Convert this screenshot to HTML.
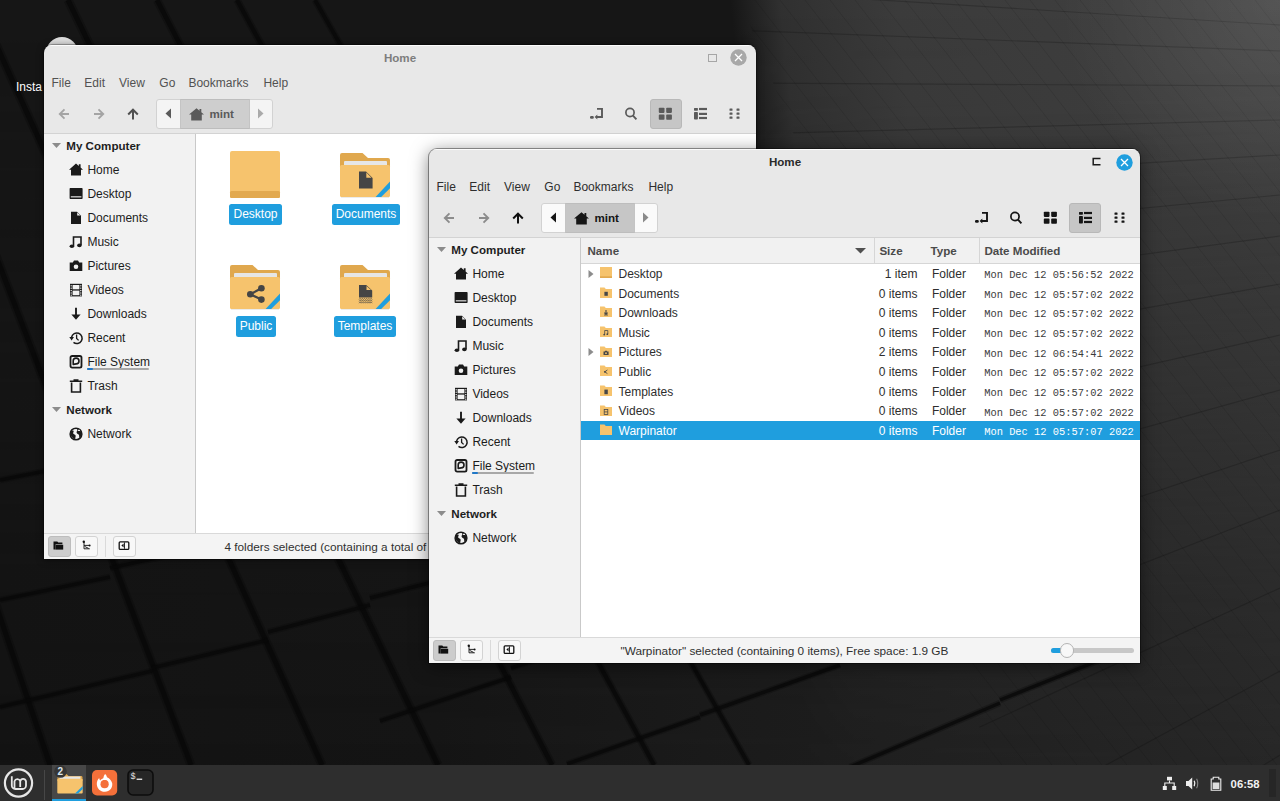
<!DOCTYPE html>
<html><head><meta charset="utf-8">
<style>
*{box-sizing:border-box;margin:0;padding:0}
html,body{width:1280px;height:801px;overflow:hidden;background:#151515;font-family:"Liberation Sans",sans-serif;font-size:12px;color:#303030}
.abs{position:absolute}
svg.abs{overflow:visible}
#wall{position:absolute;left:0;top:0;width:1280px;height:801px;background:linear-gradient(100deg,#0f0f0f 0%,#121212 40%,#262626 62%,#353535 85%,#3a3a3a 100%)}
.win{position:absolute;width:712px;height:514px;background:#e8e8e8;border-radius:8px 8px 0 0;overflow:hidden}
.win::after{content:'';position:absolute;left:0;top:0;right:0;height:1px;background:rgba(255,255,255,0.85);border-radius:8px 8px 0 0}
.t{position:absolute;white-space:pre;line-height:16px}
.lbl{position:absolute;background:#1f9ede;color:#fff;border-radius:2.5px;text-align:center;font-size:12px;line-height:21px;height:21px;white-space:pre}
</style></head><body>
<svg class="abs" style="left:0;top:0" width="1280" height="801" viewBox="0 0 1280 801">
<defs>
<linearGradient id="wg" gradientUnits="userSpaceOnUse" x1="730" y1="0" x2="1280" y2="-57">
<stop offset="0" stop-color="#161616"/><stop offset="0.09" stop-color="#303030"/><stop offset="0.3" stop-color="#3b3b3b"/><stop offset="0.7" stop-color="#3e3e3e"/><stop offset="1" stop-color="#424242"/>
</linearGradient>
<linearGradient id="wm" gradientUnits="userSpaceOnUse" x1="0" y1="0" x2="0" y2="765">
<stop offset="0" stop-color="#fff"/><stop offset="0.13" stop-color="#fff" stop-opacity="0.95"/><stop offset="0.31" stop-color="#fff" stop-opacity="0.74"/><stop offset="0.52" stop-color="#fff" stop-opacity="0.5"/><stop offset="0.78" stop-color="#fff" stop-opacity="0.2"/><stop offset="1" stop-color="#fff" stop-opacity="0.05"/>
</linearGradient>
<filter id="bl" filterUnits="userSpaceOnUse" x="-50" y="-50" width="1380" height="901"><feGaussianBlur stdDeviation="0.8"/></filter>
<clipPath id="cp"><path d="M740 0H1280V801H1000L860 300Z"/></clipPath>
<mask id="mk"><rect width="1280" height="801" fill="url(#wm)"/></mask>
<radialGradient id="wc" cx="1280" cy="0" r="220" gradientUnits="userSpaceOnUse">
<stop offset="0" stop-color="#fff" stop-opacity="0.10"/><stop offset="1" stop-color="#fff" stop-opacity="0"/>
</radialGradient>
</defs>
<linearGradient id="wb" gradientUnits="userSpaceOnUse" x1="0" y1="0" x2="1280" y2="0"><stop offset="0" stop-color="#131313"/><stop offset="0.34" stop-color="#151515"/><stop offset="0.55" stop-color="#1b1b1b"/><stop offset="0.78" stop-color="#202020"/><stop offset="1" stop-color="#262626"/></linearGradient>
<rect width="1280" height="801" fill="url(#wb)"/>
<g mask="url(#mk)"><rect width="1280" height="801" fill="url(#wg)"/></g><g clip-path="url(#cp)"><path d="M-220 0L405 801" stroke="#000" stroke-width="1" opacity="0.09"/><path d="M-195 0L430 801" stroke="#000" stroke-width="1" opacity="0.09"/><path d="M-170 0L455 801" stroke="#000" stroke-width="1" opacity="0.09"/><path d="M-145 0L480 801" stroke="#000" stroke-width="1" opacity="0.09"/><path d="M-120 0L505 801" stroke="#000" stroke-width="1" opacity="0.09"/><path d="M-95 0L530 801" stroke="#000" stroke-width="1" opacity="0.09"/><path d="M-70 0L555 801" stroke="#000" stroke-width="1" opacity="0.09"/><path d="M-45 0L580 801" stroke="#000" stroke-width="1" opacity="0.09"/><path d="M-20 0L605 801" stroke="#000" stroke-width="1" opacity="0.09"/><path d="M5 0L630 801" stroke="#000" stroke-width="1" opacity="0.09"/><path d="M30 0L655 801" stroke="#000" stroke-width="1" opacity="0.09"/><path d="M55 0L680 801" stroke="#000" stroke-width="1" opacity="0.09"/><path d="M80 0L705 801" stroke="#000" stroke-width="1" opacity="0.09"/><path d="M105 0L730 801" stroke="#000" stroke-width="1" opacity="0.09"/><path d="M130 0L755 801" stroke="#000" stroke-width="1" opacity="0.09"/><path d="M155 0L780 801" stroke="#000" stroke-width="1" opacity="0.09"/><path d="M180 0L805 801" stroke="#000" stroke-width="1" opacity="0.09"/><path d="M205 0L830 801" stroke="#000" stroke-width="1" opacity="0.09"/><path d="M230 0L855 801" stroke="#000" stroke-width="1" opacity="0.09"/><path d="M255 0L880 801" stroke="#000" stroke-width="1" opacity="0.09"/><path d="M280 0L905 801" stroke="#000" stroke-width="1" opacity="0.09"/><path d="M305 0L930 801" stroke="#000" stroke-width="1" opacity="0.09"/><path d="M330 0L955 801" stroke="#000" stroke-width="1" opacity="0.09"/><path d="M355 0L980 801" stroke="#000" stroke-width="1" opacity="0.09"/><path d="M380 0L1005 801" stroke="#000" stroke-width="1" opacity="0.09"/><path d="M405 0L1030 801" stroke="#000" stroke-width="1" opacity="0.09"/><path d="M430 0L1055 801" stroke="#000" stroke-width="1" opacity="0.09"/><path d="M455 0L1080 801" stroke="#000" stroke-width="1" opacity="0.09"/><path d="M480 0L1105 801" stroke="#000" stroke-width="1" opacity="0.09"/><path d="M505 0L1130 801" stroke="#000" stroke-width="1" opacity="0.09"/><path d="M530 0L1155 801" stroke="#000" stroke-width="1" opacity="0.09"/><path d="M555 0L1180 801" stroke="#000" stroke-width="1" opacity="0.09"/><path d="M580 0L1205 801" stroke="#000" stroke-width="1" opacity="0.09"/><path d="M605 0L1230 801" stroke="#000" stroke-width="1" opacity="0.09"/><path d="M630 0L1255 801" stroke="#000" stroke-width="1" opacity="0.09"/><path d="M655 0L1280 801" stroke="#000" stroke-width="1" opacity="0.09"/><path d="M680 0L1305 801" stroke="#000" stroke-width="1" opacity="0.09"/><path d="M705 0L1330 801" stroke="#000" stroke-width="1" opacity="0.09"/><path d="M730 0L1355 801" stroke="#000" stroke-width="1" opacity="0.09"/><path d="M755 0L1380 801" stroke="#000" stroke-width="1" opacity="0.09"/><path d="M780 0L1405 801" stroke="#000" stroke-width="1" opacity="0.09"/><path d="M805 0L1430 801" stroke="#000" stroke-width="1" opacity="0.09"/><path d="M830 0L1455 801" stroke="#000" stroke-width="1" opacity="0.09"/><path d="M855 0L1480 801" stroke="#000" stroke-width="1" opacity="0.09"/><path d="M880 0L1505 801" stroke="#000" stroke-width="1" opacity="0.09"/><path d="M905 0L1530 801" stroke="#000" stroke-width="1" opacity="0.09"/><path d="M930 0L1555 801" stroke="#000" stroke-width="1" opacity="0.09"/><path d="M955 0L1580 801" stroke="#000" stroke-width="1" opacity="0.09"/><path d="M980 0L1605 801" stroke="#000" stroke-width="1" opacity="0.09"/><path d="M1005 0L1630 801" stroke="#000" stroke-width="1" opacity="0.09"/><path d="M1030 0L1655 801" stroke="#000" stroke-width="1" opacity="0.09"/><path d="M1055 0L1680 801" stroke="#000" stroke-width="1" opacity="0.09"/><path d="M1080 0L1705 801" stroke="#000" stroke-width="1" opacity="0.09"/><path d="M1105 0L1730 801" stroke="#000" stroke-width="1" opacity="0.09"/><path d="M1130 0L1755 801" stroke="#000" stroke-width="1" opacity="0.09"/><path d="M1155 0L1780 801" stroke="#000" stroke-width="1" opacity="0.09"/><path d="M1180 0L1805 801" stroke="#000" stroke-width="1" opacity="0.09"/><path d="M1205 0L1830 801" stroke="#000" stroke-width="1" opacity="0.09"/><path d="M1230 0L1855 801" stroke="#000" stroke-width="1" opacity="0.09"/><path d="M1255 0L1880 801" stroke="#000" stroke-width="1" opacity="0.09"/><path d="M1280 0L1905 801" stroke="#000" stroke-width="1" opacity="0.09"/><path d="M1305 0L1930 801" stroke="#000" stroke-width="1" opacity="0.09"/><path d="M1330 0L1955 801" stroke="#000" stroke-width="1" opacity="0.09"/><path d="M1355 0L1980 801" stroke="#000" stroke-width="1" opacity="0.09"/><path d="M1380 0L2005 801" stroke="#000" stroke-width="1" opacity="0.09"/><path d="M1405 0L2030 801" stroke="#000" stroke-width="1" opacity="0.09"/><path d="M1430 0L2055 801" stroke="#000" stroke-width="1" opacity="0.09"/><path d="M1455 0L2080 801" stroke="#000" stroke-width="1" opacity="0.09"/><path d="M1480 0L2105 801" stroke="#000" stroke-width="1" opacity="0.09"/><path d="M1505 0L2130 801" stroke="#000" stroke-width="1" opacity="0.09"/><path d="M600 -17.5L1280 25" stroke="#000" stroke-width="1.2" opacity="0.18"/><path d="M600 25.0L1280 51" stroke="#000" stroke-width="1.2" opacity="0.18"/><path d="M600 82.2L1280 86" stroke="#000" stroke-width="1.2" opacity="0.18"/><path d="M600 137.8L1280 120" stroke="#000" stroke-width="1.2" opacity="0.18"/><path d="M600 195.0L1280 155" stroke="#000" stroke-width="1.2" opacity="0.18"/><path d="M600 260.4L1280 195" stroke="#000" stroke-width="1.2" opacity="0.18"/><path d="M600 327.4L1280 236" stroke="#000" stroke-width="1.2" opacity="0.18"/><path d="M600 405.9L1280 284" stroke="#000" stroke-width="1.2" opacity="0.18"/><path d="M600 489.3L1280 335" stroke="#000" stroke-width="1.2" opacity="0.18"/><path d="M600 579.2L1280 390" stroke="#000" stroke-width="1.2" opacity="0.18"/><path d="M600 677.3L1280 450" stroke="#000" stroke-width="1.2" opacity="0.18"/><path d="M600 775.4L1280 510" stroke="#000" stroke-width="1.2" opacity="0.18"/><path d="M600 902.9L1280 588" stroke="#000" stroke-width="1.2" opacity="0.18"/><path d="M600 1038.6L1280 671" stroke="#000" stroke-width="1.2" opacity="0.18"/><path d="M600 1176.0L1280 755" stroke="#000" stroke-width="1.2" opacity="0.18"/></g>
<path d="M-208 0L50 765" stroke="#080808" stroke-width="9.0" opacity="0.35"/><path d="M-208 0L50 765" stroke="#080808" stroke-width="5.1" opacity="0.75"/><path d="M-102 0L191 765" stroke="#080808" stroke-width="9.0" opacity="0.35"/><path d="M-102 0L191 765" stroke="#080808" stroke-width="5.1" opacity="0.75"/><path d="M-24 0L322 765" stroke="#080808" stroke-width="9.0" opacity="0.35"/><path d="M-24 0L322 765" stroke="#080808" stroke-width="5.1" opacity="0.75"/><path d="M68 0L438 765" stroke="#080808" stroke-width="9.0" opacity="0.35"/><path d="M68 0L438 765" stroke="#080808" stroke-width="5.1" opacity="0.75"/><path d="M157 0L552 765" stroke="#080808" stroke-width="8.2" opacity="0.35"/><path d="M157 0L552 765" stroke="#080808" stroke-width="4.7" opacity="0.75"/><path d="M237 0L654 765" stroke="#080808" stroke-width="7.5" opacity="0.35"/><path d="M237 0L654 765" stroke="#080808" stroke-width="4.2" opacity="0.75"/><path d="M315 0L749 765" stroke="#080808" stroke-width="6.8" opacity="0.35"/><path d="M315 0L749 765" stroke="#080808" stroke-width="3.8" opacity="0.75"/><path d="M0 707L152 671" stroke="#080808" stroke-width="6.5" opacity="0.3"/><path d="M0 707L152 671" stroke="#080808" stroke-width="3.5" opacity="0.75"/><path d="M152 668L268 640" stroke="#080808" stroke-width="6.5" opacity="0.3"/><path d="M152 668L268 640" stroke="#080808" stroke-width="3.5" opacity="0.75"/><path d="M268 632L370 605" stroke="#080808" stroke-width="6.5" opacity="0.3"/><path d="M268 632L370 605" stroke="#080808" stroke-width="3.5" opacity="0.75"/><path d="M370 598L460 575" stroke="#080808" stroke-width="6.5" opacity="0.3"/><path d="M370 598L460 575" stroke="#080808" stroke-width="3.5" opacity="0.75"/><path d="M460 566L560 540" stroke="#080808" stroke-width="6.5" opacity="0.3"/><path d="M460 566L560 540" stroke="#080808" stroke-width="3.5" opacity="0.75"/><path d="M0 600L110 577" stroke="#080808" stroke-width="6.5" opacity="0.3"/><path d="M0 600L110 577" stroke="#080808" stroke-width="3.5" opacity="0.75"/><path d="M110 568L230 542" stroke="#080808" stroke-width="6.5" opacity="0.3"/><path d="M110 568L230 542" stroke="#080808" stroke-width="3.5" opacity="0.75"/><path d="M230 534L340 508" stroke="#080808" stroke-width="6.5" opacity="0.3"/><path d="M230 534L340 508" stroke="#080808" stroke-width="3.5" opacity="0.75"/><path d="M380 721L511 677" stroke="#080808" stroke-width="6.5" opacity="0.3"/><path d="M380 721L511 677" stroke="#080808" stroke-width="3.5" opacity="0.75"/><path d="M511 668L610 636" stroke="#080808" stroke-width="6.5" opacity="0.3"/><path d="M511 668L610 636" stroke="#080808" stroke-width="3.5" opacity="0.75"/><path d="M610 628L700 600" stroke="#080808" stroke-width="6.5" opacity="0.3"/><path d="M610 628L700 600" stroke="#080808" stroke-width="3.5" opacity="0.75"/><path d="M700 594L800 566" stroke="#080808" stroke-width="6.5" opacity="0.3"/><path d="M700 594L800 566" stroke="#080808" stroke-width="3.5" opacity="0.75"/><path d="M567 764L700 717" stroke="#080808" stroke-width="6.5" opacity="0.3"/><path d="M567 764L700 717" stroke="#080808" stroke-width="3.5" opacity="0.75"/><path d="M700 715L840 665" stroke="#080808" stroke-width="6.5" opacity="0.3"/><path d="M700 715L840 665" stroke="#080808" stroke-width="3.5" opacity="0.75"/><path d="M850 767L1000 703" stroke="#080808" stroke-width="6.5" opacity="0.3"/><path d="M850 767L1000 703" stroke="#080808" stroke-width="3.5" opacity="0.75"/><path d="M1000 700L1110 656" stroke="#080808" stroke-width="6.5" opacity="0.3"/><path d="M1000 700L1110 656" stroke="#080808" stroke-width="3.5" opacity="0.75"/><path d="M0 480L90 462" stroke="#080808" stroke-width="6.5" opacity="0.3"/><path d="M0 480L90 462" stroke="#080808" stroke-width="3.5" opacity="0.75"/>
<rect width="1280" height="801" fill="url(#wc)"/>
</svg>
<div class="abs" style="left:45.5px;top:37px;width:32px;height:32px;border-radius:50%;background:#dcdcdc"></div>
<div class="t" style="left:16.00px;top:79.34px;font-size:12px;font-weight:normal;color:#ffffff;font-family:'Liberation Sans',sans-serif;">Insta</div>
<div class="win" style="left:44px;top:45px;box-shadow:0 0 0 1px rgba(0,0,0,0.25),0 1px 7px rgba(0,0,0,0.55)">
<div class="t" style="left:156.00px;width:400px;text-align:center;top:5.08px;font-size:11.6px;font-weight:bold;color:#7d7d7d">Home</div>
<div class="abs" style="left:664px;top:9px;width:8.5px;height:7.5px;background:transparent;border:1px solid #a6a6a6"></div>
<svg class="abs" style="left:686px;top:4.3px;" width="17" height="17" viewBox="0 0 17 17"><circle cx="8.5" cy="8.5" r="8.2" fill="#a8a8a8"/><path d="M5 5L12 12M12 5L5 12" stroke="#fff" stroke-width="1.3"/></svg>
<div class="t" style="left:7.50px;top:30.44px;font-size:12px;font-weight:normal;color:#525252;font-family:'Liberation Sans',sans-serif;">File</div>
<div class="t" style="left:40.30px;top:30.44px;font-size:12px;font-weight:normal;color:#525252;font-family:'Liberation Sans',sans-serif;">Edit</div>
<div class="t" style="left:75.00px;top:30.44px;font-size:12px;font-weight:normal;color:#525252;font-family:'Liberation Sans',sans-serif;">View</div>
<div class="t" style="left:115.30px;top:30.44px;font-size:12px;font-weight:normal;color:#525252;font-family:'Liberation Sans',sans-serif;">Go</div>
<div class="t" style="left:144.40px;top:30.44px;font-size:12px;font-weight:normal;color:#525252;font-family:'Liberation Sans',sans-serif;">Bookmarks</div>
<div class="t" style="left:219.40px;top:30.44px;font-size:12px;font-weight:normal;color:#525252;font-family:'Liberation Sans',sans-serif;">Help</div>
<svg class="abs" style="left:14px;top:62.5px;" width="12" height="12" viewBox="0 0 12 12"><path d="M11 6H2M6.5 1.3L1.8 6L6.5 10.7" stroke="#a4a4a4" stroke-width="1.9" fill="none" stroke-linecap="butt"/></svg>
<svg class="abs" style="left:48.5px;top:62.5px;" width="12" height="12" viewBox="0 0 12 12"><path d="M1 6H10M5.5 1.3L10.2 6L5.5 10.7" stroke="#a4a4a4" stroke-width="1.9" fill="none"/></svg>
<svg class="abs" style="left:83.4px;top:62.5px;" width="12" height="12" viewBox="0 0 12 12"><path d="M6 11.5V1.8M1.2 6.5L6 1.7L10.8 6.5" stroke="#505050" stroke-width="2" fill="none"/></svg>
<div class="abs" style="left:111.5px;top:54px;width:117px;height:29.5px;background:#f4f4f4;border:1px solid #d2d2d2;border-radius:3px"></div>
<div class="abs" style="left:135.5px;top:54px;width:70px;height:29.5px;background:#cecece;border:1px solid #bdbdbd;border-left:1px solid #c4c4c4;border-right:1px solid #c4c4c4"></div>
<svg class="abs" style="left:121px;top:63px;" width="7" height="11" viewBox="0 0 7 11"><path d="M6 0.5V10.5L0.5 5.5Z" fill="#5a5a5a"/></svg>
<svg class="abs" style="left:214px;top:63px;" width="6" height="11" viewBox="0 0 6 11"><path d="M0 0.5V10.5L5.5 5.5Z" fill="#aaaaaa"/></svg>
<svg class="abs" style="left:145px;top:62.5px;" width="15" height="12.5" viewBox="0 0 15 12.5"><path d="M7.5 0.3L0 6.6H2.2V12.5H12.8V6.6H15L12.3 4.3V1H10.5V2.8Z" fill="#5a5a5a"/></svg>
<div class="t" style="left:165.50px;top:61.18px;font-size:11.6px;font-weight:bold;color:#5a5a5a;font-family:'Liberation Sans',sans-serif;">mint</div>
<div class="abs" style="left:606px;top:54px;width:32px;height:30px;background:#c6c6c6;border:1px solid #b8b8b8;border-radius:3px"></div>
<svg class="abs" style="left:545px;top:62px;" width="16" height="14" viewBox="0 0 16 14"><path d="M8 1.9H13V10H7.5" stroke="#5a5a5a" stroke-width="1.9" fill="none"/><path d="M8.3 7.4V12.6L5.6 10Z" fill="#5a5a5a"/><rect x="1" y="9" width="3.8" height="2.8" rx="1.2" fill="#5a5a5a"/></svg>
<svg class="abs" style="left:579px;top:62px;" width="16" height="14" viewBox="0 0 16 14"><circle cx="7" cy="5.5" r="4.1" stroke="#5a5a5a" stroke-width="1.7" fill="none"/><path d="M9.8 8.4L13.4 12.3" stroke="#5a5a5a" stroke-width="1.9"/></svg>
<svg class="abs" style="left:614px;top:62px;" width="15" height="14" viewBox="0 0 15 14"><rect x="0.8" y="0.7" width="5.7" height="5.2" rx="0.8" fill="#5a5a5a"/><rect x="8.2" y="0.7" width="5.7" height="5.2" rx="0.8" fill="#5a5a5a"/><rect x="0.8" y="7.6" width="5.7" height="5.2" rx="0.8" fill="#5a5a5a"/><rect x="8.2" y="7.6" width="5.7" height="5.2" rx="0.8" fill="#5a5a5a"/></svg>
<svg class="abs" style="left:649px;top:62px;" width="15" height="14" viewBox="0 0 15 14"><rect x="1" y="0.9" width="3.9" height="2.8" rx="0.6" fill="#5a5a5a"/><rect x="1" y="5" width="3.9" height="7.5" rx="0.8" fill="#5a5a5a"/><rect x="6" y="0.9" width="8" height="2.2" fill="#5a5a5a"/><rect x="6" y="5.8" width="8" height="2.2" fill="#5a5a5a"/><rect x="6" y="9.9" width="8" height="2.2" fill="#5a5a5a"/></svg>
<svg class="abs" style="left:685px;top:62px;" width="12" height="14" viewBox="0 0 12 14"><rect x="0.5" y="1.5" width="3" height="2.2" rx="0.5" fill="#5a5a5a"/><rect x="0.5" y="5.5" width="3" height="2.2" rx="0.5" fill="#5a5a5a"/><rect x="0.5" y="9.5" width="3" height="2.2" rx="0.5" fill="#5a5a5a"/><rect x="7.5" y="1.5" width="3" height="2.2" rx="0.5" fill="#5a5a5a"/><rect x="7.5" y="5.5" width="3" height="2.2" rx="0.5" fill="#5a5a5a"/><rect x="7.5" y="9.5" width="3" height="2.2" rx="0.5" fill="#5a5a5a"/></svg>
<div class="abs" style="left:0px;top:88px;width:712px;height:1px;background:#d3d3d3;"></div>
<div class="abs" style="left:0px;top:89px;width:151px;height:399px;background:#f2f2f2;"></div>
<div class="abs" style="left:151px;top:89px;width:1px;height:399px;background:#c9c9c9;"></div>
<svg class="abs" style="left:7.5px;top:97.5px;" width="9" height="5" viewBox="0 0 9 5"><path d="M0 0H9L4.5 5Z" fill="#8c8c8c"/></svg>
<div class="t" style="left:22.30px;top:93.08px;font-size:11.6px;font-weight:bold;color:#1e1e1e;font-family:'Liberation Sans',sans-serif;">My Computer</div>
<svg class="abs" style="left:24.5px;top:118px;" width="14" height="14" viewBox="0 0 14 14"><path d="M7 0.5L0 6.7H2V12.5H12V6.7H14L11.6 4.5V1.2H9.8V2.9Z" fill="#1a1a1a"/></svg>
<div class="t" style="left:43.40px;top:117.44px;font-size:12px;font-weight:normal;color:#1c1c1c;font-family:'Liberation Sans',sans-serif;">Home</div>
<svg class="abs" style="left:24.5px;top:142px;" width="14" height="14" viewBox="0 0 14 14"><rect x="0.6" y="1" width="13" height="11" rx="0.8" fill="#1a1a1a"/><rect x="1.8" y="9.3" width="10.6" height="1.1" fill="#f2f2f2"/></svg>
<div class="t" style="left:43.40px;top:141.44px;font-size:12px;font-weight:normal;color:#1c1c1c;font-family:'Liberation Sans',sans-serif;">Desktop</div>
<svg class="abs" style="left:24.5px;top:166px;" width="14" height="14" viewBox="0 0 14 14"><path d="M2 0.8H8L12 4.8V13H2Z" fill="#1a1a1a"/><path d="M8.2 1.4V4.6H11.4Z" fill="#f2f2f2"/></svg>
<div class="t" style="left:43.40px;top:165.44px;font-size:12px;font-weight:normal;color:#1c1c1c;font-family:'Liberation Sans',sans-serif;">Documents</div>
<svg class="abs" style="left:24.5px;top:190px;" width="14" height="14" viewBox="0 0 14 14"><path d="M4.5 11V2H12V10" stroke="#1a1a1a" stroke-width="1.6" fill="none"/><ellipse cx="2.9" cy="11.2" rx="2.3" ry="1.8" fill="#1a1a1a"/><ellipse cx="10.4" cy="10.4" rx="2.3" ry="1.8" fill="#1a1a1a"/></svg>
<div class="t" style="left:43.40px;top:189.44px;font-size:12px;font-weight:normal;color:#1c1c1c;font-family:'Liberation Sans',sans-serif;">Music</div>
<svg class="abs" style="left:24.5px;top:214px;" width="14" height="14" viewBox="0 0 14 14"><path d="M0.7 3.5H3.8L5 1.6H9L10.2 3.5H13.3V12H0.7Z" fill="#1a1a1a"/><circle cx="7" cy="7.7" r="2.3" fill="#f2f2f2"/></svg>
<div class="t" style="left:43.40px;top:213.44px;font-size:12px;font-weight:normal;color:#1c1c1c;font-family:'Liberation Sans',sans-serif;">Pictures</div>
<svg class="abs" style="left:24.5px;top:238px;" width="14" height="14" viewBox="0 0 14 14"><rect x="1" y="0.8" width="12" height="12.6" fill="#1a1a1a"/><rect x="3.6" y="2" width="6.8" height="4.3" fill="#f2f2f2"/><rect x="3.6" y="7.6" width="6.8" height="4.6" fill="#f2f2f2"/><rect x="1.6" y="2.2" width="1.2" height="1.2" fill="#f2f2f2"/><rect x="1.6" y="4.6" width="1.2" height="1.2" fill="#f2f2f2"/><rect x="1.6" y="7" width="1.2" height="1.2" fill="#f2f2f2"/><rect x="1.6" y="9.4" width="1.2" height="1.2" fill="#f2f2f2"/><rect x="1.6" y="11.6" width="1.2" height="1.2" fill="#f2f2f2"/><rect x="11.2" y="2.2" width="1.2" height="1.2" fill="#f2f2f2"/><rect x="11.2" y="4.6" width="1.2" height="1.2" fill="#f2f2f2"/><rect x="11.2" y="7" width="1.2" height="1.2" fill="#f2f2f2"/><rect x="11.2" y="9.4" width="1.2" height="1.2" fill="#f2f2f2"/><rect x="11.2" y="11.6" width="1.2" height="1.2" fill="#f2f2f2"/></svg>
<div class="t" style="left:43.40px;top:237.44px;font-size:12px;font-weight:normal;color:#1c1c1c;font-family:'Liberation Sans',sans-serif;">Videos</div>
<svg class="abs" style="left:24.5px;top:262px;" width="14" height="14" viewBox="0 0 14 14"><path d="M7 0.8V10" stroke="#1a1a1a" stroke-width="1.9"/><path d="M2.4 7.5L7 12.8L11.6 7.5Z" fill="#1a1a1a"/></svg>
<div class="t" style="left:43.40px;top:261.44px;font-size:12px;font-weight:normal;color:#1c1c1c;font-family:'Liberation Sans',sans-serif;">Downloads</div>
<svg class="abs" style="left:24.5px;top:286px;" width="14" height="14" viewBox="0 0 14 14"><path d="M2.6 6.2A5.3 5.3 0 1 1 4.5 11.4" stroke="#1a1a1a" stroke-width="1.5" fill="none"/><path d="M0.3 6H5L2.6 9.4Z" fill="#1a1a1a"/><path d="M7.6 3.6V7.4L9.6 9.4" stroke="#1a1a1a" stroke-width="1.3" fill="none"/></svg>
<div class="t" style="left:43.40px;top:285.44px;font-size:12px;font-weight:normal;color:#1c1c1c;font-family:'Liberation Sans',sans-serif;">Recent</div>
<svg class="abs" style="left:24.5px;top:310px;" width="14" height="14" viewBox="0 0 14 14"><rect x="1.5" y="1" width="11" height="11.7" rx="1.6" stroke="#1a1a1a" stroke-width="1.8" fill="none"/><path d="M4.2 9.4V6A2.9 2.9 0 1 1 7.2 8.9Z" stroke="#1a1a1a" stroke-width="1.6" fill="none" stroke-linejoin="round"/></svg>
<div class="t" style="left:43.40px;top:309.44px;font-size:12px;font-weight:normal;color:#1c1c1c;font-family:'Liberation Sans',sans-serif;">File System</div>
<svg class="abs" style="left:24.5px;top:334px;" width="14" height="14" viewBox="0 0 14 14"><path d="M0.8 2.2H13.2M4.5 0.9H9.5" stroke="#1a1a1a" stroke-width="1.4"/><path d="M2.6 3.6V13H11.4V3.6" stroke="#1a1a1a" stroke-width="1.6" fill="none"/></svg>
<div class="t" style="left:43.40px;top:333.44px;font-size:12px;font-weight:normal;color:#1c1c1c;font-family:'Liberation Sans',sans-serif;">Trash</div>
<div class="abs" style="left:43px;top:323px;width:62px;height:2px;background:#a8a8a8;border-radius:1px"></div>
<div class="abs" style="left:43px;top:323px;width:6px;height:2px;background:#1f78c8;border-radius:1px"></div>
<svg class="abs" style="left:7.5px;top:361.5px;" width="9" height="5" viewBox="0 0 9 5"><path d="M0 0H9L4.5 5Z" fill="#8c8c8c"/></svg>
<div class="t" style="left:22.30px;top:357.08px;font-size:11.6px;font-weight:bold;color:#1e1e1e;font-family:'Liberation Sans',sans-serif;">Network</div>
<svg class="abs" style="left:24.5px;top:382px;" width="14" height="14" viewBox="0 0 14 14"><circle cx="7" cy="7" r="6.6" fill="#1a1a1a"/><circle cx="7" cy="7" r="5.1" fill="#f2f2f2"/><path d="M1.8 4.2C3 3.6 4.2 3 4.6 4C5 5 3.8 5.6 4.2 6.6C4.8 7.6 6 7.4 6.6 8.4C7 9.2 6.2 10 6.4 11.2L6 12.2C4 11.6 2.2 10 1.8 8Z" fill="#1a1a1a"/><path d="M8 1.8C8.6 3 8 4 7.6 5C7.2 6.2 8.6 6.8 9.6 7.4C10.4 8 10 9.6 10.4 11.2L11.6 10.2C12.6 8.6 12.6 5 11 3C10 2.4 9 1.9 8 1.8Z" fill="#1a1a1a"/><path d="M8.8 3.4H11" stroke="#f2f2f2" stroke-width="1.1"/></svg>
<div class="t" style="left:43.40px;top:381.44px;font-size:12px;font-weight:normal;color:#1c1c1c;font-family:'Liberation Sans',sans-serif;">Network</div>
<div class="abs" style="left:152px;top:89px;width:560px;height:399px;background:#ffffff;"></div>
<svg class="abs" style="left:186px;top:106px;" width="50" height="48" viewBox="0 0 50 48"><rect x="0" y="0" width="50" height="47" rx="2" fill="#f6c36d"/><rect x="0" y="40" width="50" height="7" rx="1.5" fill="#e2a94f"/></svg>
<svg class="abs" style="left:296px;top:107.5px;" width="50" height="46" viewBox="0 0 50 46"><defs></defs><path d="M2 0H22.5L28 5H48A2 2 0 0 1 50 7V20H0V2A2 2 0 0 1 2 0Z" fill="#e0a84e"/><rect x="4" y="8" width="43" height="6" rx="1" fill="#e6e6e6"/><rect x="0" y="12" width="50" height="32" rx="1.5" fill="#f6c36d"/><path d="M35.6 44L41.2 44L50 35.2V28.6Z" fill="#1f9ede"/><rect x="1" y="44" width="48" height="1" fill="#000" opacity="0.08"/><path d="M19 18.4H26L32.6 25V35.6H19Z" fill="#454545"/><path d="M26.3 19.5V24.7H31.5Z" fill="#f6c36d"/></svg>
<svg class="abs" style="left:186px;top:219.5px;" width="50" height="46" viewBox="0 0 50 46"><defs></defs><path d="M2 0H22.5L28 5H48A2 2 0 0 1 50 7V20H0V2A2 2 0 0 1 2 0Z" fill="#e0a84e"/><rect x="4" y="8" width="43" height="6" rx="1" fill="#e6e6e6"/><rect x="0" y="12" width="50" height="32" rx="1.5" fill="#f6c36d"/><path d="M35.6 44L41.2 44L50 35.2V28.6Z" fill="#1f9ede"/><rect x="1" y="44" width="48" height="1" fill="#000" opacity="0.08"/><circle cx="20.3" cy="29.3" r="3.3" fill="#454545"/><circle cx="31.4" cy="23.3" r="3.3" fill="#454545"/><circle cx="31.4" cy="34.6" r="3.3" fill="#454545"/><path d="M20.3 29.3L31.4 23.3M20.3 29.3L31.4 34.6" stroke="#454545" stroke-width="2.2"/></svg>
<svg class="abs" style="left:296px;top:219.5px;" width="50" height="46" viewBox="0 0 50 46"><defs></defs><path d="M2 0H22.5L28 5H48A2 2 0 0 1 50 7V20H0V2A2 2 0 0 1 2 0Z" fill="#e0a84e"/><rect x="4" y="8" width="43" height="6" rx="1" fill="#e6e6e6"/><rect x="0" y="12" width="50" height="32" rx="1.5" fill="#f6c36d"/><path d="M35.6 44L41.2 44L50 35.2V28.6Z" fill="#1f9ede"/><rect x="1" y="44" width="48" height="1" fill="#000" opacity="0.08"/><path d="M19 19.9H26.2L32.2 25.6V32.6H19Z" fill="#454545"/><path d="M26.5 21V25.1H31Z" fill="#f6c36d"/><path d="M19 34.6L20.1 33.300000000000004L21.2 34.6L22.3 33.300000000000004L23.4 34.6L24.5 33.300000000000004L25.6 34.6L26.7 33.300000000000004L27.8 34.6L28.9 33.300000000000004L30 34.6L31.1 33.300000000000004L32.2 34.6" stroke="#454545" stroke-width="0.8" fill="none" opacity="0.8"/><path d="M19 36.4L20.1 35.1L21.2 36.4L22.3 35.1L23.4 36.4L24.5 35.1L25.6 36.4L26.7 35.1L27.8 36.4L28.9 35.1L30 36.4L31.1 35.1L32.2 36.4" stroke="#454545" stroke-width="0.8" fill="none" opacity="0.8"/><path d="M19 38.2L20.1 36.900000000000006L21.2 38.2L22.3 36.900000000000006L23.4 38.2L24.5 36.900000000000006L25.6 38.2L26.7 36.900000000000006L27.8 38.2L28.9 36.900000000000006L30 38.2L31.1 36.900000000000006L32.2 38.2" stroke="#454545" stroke-width="0.8" fill="none" opacity="0.8"/></svg>
<div class="lbl" style="left:185px;top:159px;width:53px">Desktop</div>
<div class="lbl" style="left:288px;top:159px;width:68px">Documents</div>
<div class="lbl" style="left:192px;top:271px;width:40px">Public</div>
<div class="lbl" style="left:290px;top:271px;width:62px">Templates</div>
<div class="abs" style="left:0px;top:488px;width:712px;height:1px;background:#d9d9d9;"></div>
<div class="abs" style="left:0px;top:489px;width:712px;height:25px;background:#f4f4f4;"></div>
<div class="abs" style="left:4px;top:491px;width:23px;height:21px;background:#cccccc;border:1px solid #bdbdbd;border-radius:3px"></div>
<div class="abs" style="left:31px;top:491px;width:23px;height:21px;background:#f8f8f8;border:1px solid #d3d3d3;border-radius:3px"></div>
<div class="abs" style="left:61px;top:491px;width:1px;height:21px;background:#dadada;"></div>
<div class="abs" style="left:69px;top:491px;width:23px;height:21px;background:#f8f8f8;border:1px solid #d3d3d3;border-radius:3px"></div>
<svg class="abs" style="left:9px;top:495px;" width="12" height="12" viewBox="0 0 12 12"><path d="M0.5 1.5H4.3L5.2 2.6H9.4V4.2H2.6V9.5H0.5Z" fill="#111"/><rect x="2.6" y="4.8" width="7.6" height="4.8" fill="#111"/></svg>
<svg class="abs" style="left:36.5px;top:495px;" width="12" height="12" viewBox="0 0 12 12"><circle cx="2.8" cy="1.8" r="1.2" fill="#111"/><path d="M3 2V8.8H8.8M3 5.4H8.2" stroke="#111" stroke-width="0.9" fill="none"/><circle cx="8.6" cy="5.4" r="1" fill="#111"/><path d="M3.6 6.4L7.6 8.4" stroke="#111" stroke-width="0.9"/></svg>
<svg class="abs" style="left:74px;top:495px;" width="12" height="12" viewBox="0 0 12 12"><rect x="1.2" y="1.8" width="9.6" height="7.6" rx="1" stroke="#111" stroke-width="1.3" fill="none"/><path d="M5.6 3.6V7.6L3.4 5.6Z" fill="#111"/><path d="M6.5 2.4V8.8" stroke="#111" stroke-width="0.9"/></svg>
<div class="t" style="left:180.40px;top:493.81px;font-size:11.8px;font-weight:normal;color:#303030;font-family:'Liberation Sans',sans-serif;">4 folders selected (containing a total of 1 item), Free space: 1.9 GB</div>
</div>
<div class="win" style="left:429px;top:149px;width:711px;box-shadow:0 0 0 1px rgba(0,0,0,0.38),0 3px 18px rgba(0,0,0,0.5)">
<div class="t" style="left:156.00px;width:400px;text-align:center;top:5.08px;font-size:11.6px;font-weight:bold;color:#2a2a2a">Home</div>
<svg class="abs" style="left:663px;top:8px;" width="9" height="9" viewBox="0 0 9 9"><path d="M8.5 1.5H1.2V7.7H8.5" stroke="#1a1a1a" stroke-width="1.5" fill="none"/></svg>
<svg class="abs" style="left:686.5px;top:4.8px;" width="17" height="17" viewBox="0 0 17 17"><circle cx="8.5" cy="8.5" r="8.2" fill="#1f9ede"/><path d="M5 5L12 12M12 5L5 12" stroke="#fff" stroke-width="1.3"/></svg>
<div class="t" style="left:7.50px;top:30.44px;font-size:12px;font-weight:normal;color:#2e2e2e;font-family:'Liberation Sans',sans-serif;">File</div>
<div class="t" style="left:40.30px;top:30.44px;font-size:12px;font-weight:normal;color:#2e2e2e;font-family:'Liberation Sans',sans-serif;">Edit</div>
<div class="t" style="left:75.00px;top:30.44px;font-size:12px;font-weight:normal;color:#2e2e2e;font-family:'Liberation Sans',sans-serif;">View</div>
<div class="t" style="left:115.30px;top:30.44px;font-size:12px;font-weight:normal;color:#2e2e2e;font-family:'Liberation Sans',sans-serif;">Go</div>
<div class="t" style="left:144.40px;top:30.44px;font-size:12px;font-weight:normal;color:#2e2e2e;font-family:'Liberation Sans',sans-serif;">Bookmarks</div>
<div class="t" style="left:219.40px;top:30.44px;font-size:12px;font-weight:normal;color:#2e2e2e;font-family:'Liberation Sans',sans-serif;">Help</div>
<svg class="abs" style="left:14px;top:62.5px;" width="12" height="12" viewBox="0 0 12 12"><path d="M11 6H2M6.5 1.3L1.8 6L6.5 10.7" stroke="#8c8c8c" stroke-width="1.9" fill="none" stroke-linecap="butt"/></svg>
<svg class="abs" style="left:48.5px;top:62.5px;" width="12" height="12" viewBox="0 0 12 12"><path d="M1 6H10M5.5 1.3L10.2 6L5.5 10.7" stroke="#8c8c8c" stroke-width="1.9" fill="none"/></svg>
<svg class="abs" style="left:83.4px;top:62.5px;" width="12" height="12" viewBox="0 0 12 12"><path d="M6 11.5V1.8M1.2 6.5L6 1.7L10.8 6.5" stroke="#101010" stroke-width="2" fill="none"/></svg>
<div class="abs" style="left:111.5px;top:54px;width:117px;height:29.5px;background:#fafafa;border:1px solid #d2d2d2;border-radius:3px"></div>
<div class="abs" style="left:135.5px;top:54px;width:70px;height:29.5px;background:#c6c6c6;border:1px solid #bdbdbd;border-left:1px solid #c4c4c4;border-right:1px solid #c4c4c4"></div>
<svg class="abs" style="left:121px;top:63px;" width="7" height="11" viewBox="0 0 7 11"><path d="M6 0.5V10.5L0.5 5.5Z" fill="#151515"/></svg>
<svg class="abs" style="left:214px;top:63px;" width="6" height="11" viewBox="0 0 6 11"><path d="M0 0.5V10.5L5.5 5.5Z" fill="#8a8a8a"/></svg>
<svg class="abs" style="left:145px;top:62.5px;" width="15" height="12.5" viewBox="0 0 15 12.5"><path d="M7.5 0.3L0 6.6H2.2V12.5H12.8V6.6H15L12.3 4.3V1H10.5V2.8Z" fill="#151515"/></svg>
<div class="t" style="left:165.50px;top:61.18px;font-size:11.6px;font-weight:bold;color:#151515;font-family:'Liberation Sans',sans-serif;">mint</div>
<div class="abs" style="left:640px;top:54px;width:32px;height:30px;background:#c6c6c6;border:1px solid #b8b8b8;border-radius:3px"></div>
<svg class="abs" style="left:545px;top:62px;" width="16" height="14" viewBox="0 0 16 14"><path d="M8 1.9H13V10H7.5" stroke="#151515" stroke-width="1.9" fill="none"/><path d="M8.3 7.4V12.6L5.6 10Z" fill="#151515"/><rect x="1" y="9" width="3.8" height="2.8" rx="1.2" fill="#151515"/></svg>
<svg class="abs" style="left:579px;top:62px;" width="16" height="14" viewBox="0 0 16 14"><circle cx="7" cy="5.5" r="4.1" stroke="#151515" stroke-width="1.7" fill="none"/><path d="M9.8 8.4L13.4 12.3" stroke="#151515" stroke-width="1.9"/></svg>
<svg class="abs" style="left:614px;top:62px;" width="15" height="14" viewBox="0 0 15 14"><rect x="0.8" y="0.7" width="5.7" height="5.2" rx="0.8" fill="#151515"/><rect x="8.2" y="0.7" width="5.7" height="5.2" rx="0.8" fill="#151515"/><rect x="0.8" y="7.6" width="5.7" height="5.2" rx="0.8" fill="#151515"/><rect x="8.2" y="7.6" width="5.7" height="5.2" rx="0.8" fill="#151515"/></svg>
<svg class="abs" style="left:649px;top:62px;" width="15" height="14" viewBox="0 0 15 14"><rect x="1" y="0.9" width="3.9" height="2.8" rx="0.6" fill="#151515"/><rect x="1" y="5" width="3.9" height="7.5" rx="0.8" fill="#151515"/><rect x="6" y="0.9" width="8" height="2.2" fill="#151515"/><rect x="6" y="5.8" width="8" height="2.2" fill="#151515"/><rect x="6" y="9.9" width="8" height="2.2" fill="#151515"/></svg>
<svg class="abs" style="left:685px;top:62px;" width="12" height="14" viewBox="0 0 12 14"><rect x="0.5" y="1.5" width="3" height="2.2" rx="0.5" fill="#151515"/><rect x="0.5" y="5.5" width="3" height="2.2" rx="0.5" fill="#151515"/><rect x="0.5" y="9.5" width="3" height="2.2" rx="0.5" fill="#151515"/><rect x="7.5" y="1.5" width="3" height="2.2" rx="0.5" fill="#151515"/><rect x="7.5" y="5.5" width="3" height="2.2" rx="0.5" fill="#151515"/><rect x="7.5" y="9.5" width="3" height="2.2" rx="0.5" fill="#151515"/></svg>
<div class="abs" style="left:0px;top:88px;width:712px;height:1px;background:#d3d3d3;"></div>
<div class="abs" style="left:0px;top:89px;width:151px;height:399px;background:#f2f2f2;"></div>
<div class="abs" style="left:151px;top:89px;width:1px;height:399px;background:#c9c9c9;"></div>
<svg class="abs" style="left:7.5px;top:97.5px;" width="9" height="5" viewBox="0 0 9 5"><path d="M0 0H9L4.5 5Z" fill="#8c8c8c"/></svg>
<div class="t" style="left:22.30px;top:93.08px;font-size:11.6px;font-weight:bold;color:#1e1e1e;font-family:'Liberation Sans',sans-serif;">My Computer</div>
<svg class="abs" style="left:24.5px;top:118px;" width="14" height="14" viewBox="0 0 14 14"><path d="M7 0.5L0 6.7H2V12.5H12V6.7H14L11.6 4.5V1.2H9.8V2.9Z" fill="#1a1a1a"/></svg>
<div class="t" style="left:43.40px;top:117.44px;font-size:12px;font-weight:normal;color:#1c1c1c;font-family:'Liberation Sans',sans-serif;">Home</div>
<svg class="abs" style="left:24.5px;top:142px;" width="14" height="14" viewBox="0 0 14 14"><rect x="0.6" y="1" width="13" height="11" rx="0.8" fill="#1a1a1a"/><rect x="1.8" y="9.3" width="10.6" height="1.1" fill="#f2f2f2"/></svg>
<div class="t" style="left:43.40px;top:141.44px;font-size:12px;font-weight:normal;color:#1c1c1c;font-family:'Liberation Sans',sans-serif;">Desktop</div>
<svg class="abs" style="left:24.5px;top:166px;" width="14" height="14" viewBox="0 0 14 14"><path d="M2 0.8H8L12 4.8V13H2Z" fill="#1a1a1a"/><path d="M8.2 1.4V4.6H11.4Z" fill="#f2f2f2"/></svg>
<div class="t" style="left:43.40px;top:165.44px;font-size:12px;font-weight:normal;color:#1c1c1c;font-family:'Liberation Sans',sans-serif;">Documents</div>
<svg class="abs" style="left:24.5px;top:190px;" width="14" height="14" viewBox="0 0 14 14"><path d="M4.5 11V2H12V10" stroke="#1a1a1a" stroke-width="1.6" fill="none"/><ellipse cx="2.9" cy="11.2" rx="2.3" ry="1.8" fill="#1a1a1a"/><ellipse cx="10.4" cy="10.4" rx="2.3" ry="1.8" fill="#1a1a1a"/></svg>
<div class="t" style="left:43.40px;top:189.44px;font-size:12px;font-weight:normal;color:#1c1c1c;font-family:'Liberation Sans',sans-serif;">Music</div>
<svg class="abs" style="left:24.5px;top:214px;" width="14" height="14" viewBox="0 0 14 14"><path d="M0.7 3.5H3.8L5 1.6H9L10.2 3.5H13.3V12H0.7Z" fill="#1a1a1a"/><circle cx="7" cy="7.7" r="2.3" fill="#f2f2f2"/></svg>
<div class="t" style="left:43.40px;top:213.44px;font-size:12px;font-weight:normal;color:#1c1c1c;font-family:'Liberation Sans',sans-serif;">Pictures</div>
<svg class="abs" style="left:24.5px;top:238px;" width="14" height="14" viewBox="0 0 14 14"><rect x="1" y="0.8" width="12" height="12.6" fill="#1a1a1a"/><rect x="3.6" y="2" width="6.8" height="4.3" fill="#f2f2f2"/><rect x="3.6" y="7.6" width="6.8" height="4.6" fill="#f2f2f2"/><rect x="1.6" y="2.2" width="1.2" height="1.2" fill="#f2f2f2"/><rect x="1.6" y="4.6" width="1.2" height="1.2" fill="#f2f2f2"/><rect x="1.6" y="7" width="1.2" height="1.2" fill="#f2f2f2"/><rect x="1.6" y="9.4" width="1.2" height="1.2" fill="#f2f2f2"/><rect x="1.6" y="11.6" width="1.2" height="1.2" fill="#f2f2f2"/><rect x="11.2" y="2.2" width="1.2" height="1.2" fill="#f2f2f2"/><rect x="11.2" y="4.6" width="1.2" height="1.2" fill="#f2f2f2"/><rect x="11.2" y="7" width="1.2" height="1.2" fill="#f2f2f2"/><rect x="11.2" y="9.4" width="1.2" height="1.2" fill="#f2f2f2"/><rect x="11.2" y="11.6" width="1.2" height="1.2" fill="#f2f2f2"/></svg>
<div class="t" style="left:43.40px;top:237.44px;font-size:12px;font-weight:normal;color:#1c1c1c;font-family:'Liberation Sans',sans-serif;">Videos</div>
<svg class="abs" style="left:24.5px;top:262px;" width="14" height="14" viewBox="0 0 14 14"><path d="M7 0.8V10" stroke="#1a1a1a" stroke-width="1.9"/><path d="M2.4 7.5L7 12.8L11.6 7.5Z" fill="#1a1a1a"/></svg>
<div class="t" style="left:43.40px;top:261.44px;font-size:12px;font-weight:normal;color:#1c1c1c;font-family:'Liberation Sans',sans-serif;">Downloads</div>
<svg class="abs" style="left:24.5px;top:286px;" width="14" height="14" viewBox="0 0 14 14"><path d="M2.6 6.2A5.3 5.3 0 1 1 4.5 11.4" stroke="#1a1a1a" stroke-width="1.5" fill="none"/><path d="M0.3 6H5L2.6 9.4Z" fill="#1a1a1a"/><path d="M7.6 3.6V7.4L9.6 9.4" stroke="#1a1a1a" stroke-width="1.3" fill="none"/></svg>
<div class="t" style="left:43.40px;top:285.44px;font-size:12px;font-weight:normal;color:#1c1c1c;font-family:'Liberation Sans',sans-serif;">Recent</div>
<svg class="abs" style="left:24.5px;top:310px;" width="14" height="14" viewBox="0 0 14 14"><rect x="1.5" y="1" width="11" height="11.7" rx="1.6" stroke="#1a1a1a" stroke-width="1.8" fill="none"/><path d="M4.2 9.4V6A2.9 2.9 0 1 1 7.2 8.9Z" stroke="#1a1a1a" stroke-width="1.6" fill="none" stroke-linejoin="round"/></svg>
<div class="t" style="left:43.40px;top:309.44px;font-size:12px;font-weight:normal;color:#1c1c1c;font-family:'Liberation Sans',sans-serif;">File System</div>
<svg class="abs" style="left:24.5px;top:334px;" width="14" height="14" viewBox="0 0 14 14"><path d="M0.8 2.2H13.2M4.5 0.9H9.5" stroke="#1a1a1a" stroke-width="1.4"/><path d="M2.6 3.6V13H11.4V3.6" stroke="#1a1a1a" stroke-width="1.6" fill="none"/></svg>
<div class="t" style="left:43.40px;top:333.44px;font-size:12px;font-weight:normal;color:#1c1c1c;font-family:'Liberation Sans',sans-serif;">Trash</div>
<div class="abs" style="left:43px;top:323px;width:62px;height:2px;background:#a8a8a8;border-radius:1px"></div>
<div class="abs" style="left:43px;top:323px;width:6px;height:2px;background:#1f78c8;border-radius:1px"></div>
<svg class="abs" style="left:7.5px;top:361.5px;" width="9" height="5" viewBox="0 0 9 5"><path d="M0 0H9L4.5 5Z" fill="#8c8c8c"/></svg>
<div class="t" style="left:22.30px;top:357.08px;font-size:11.6px;font-weight:bold;color:#1e1e1e;font-family:'Liberation Sans',sans-serif;">Network</div>
<svg class="abs" style="left:24.5px;top:382px;" width="14" height="14" viewBox="0 0 14 14"><circle cx="7" cy="7" r="6.6" fill="#1a1a1a"/><circle cx="7" cy="7" r="5.1" fill="#f2f2f2"/><path d="M1.8 4.2C3 3.6 4.2 3 4.6 4C5 5 3.8 5.6 4.2 6.6C4.8 7.6 6 7.4 6.6 8.4C7 9.2 6.2 10 6.4 11.2L6 12.2C4 11.6 2.2 10 1.8 8Z" fill="#1a1a1a"/><path d="M8 1.8C8.6 3 8 4 7.6 5C7.2 6.2 8.6 6.8 9.6 7.4C10.4 8 10 9.6 10.4 11.2L11.6 10.2C12.6 8.6 12.6 5 11 3C10 2.4 9 1.9 8 1.8Z" fill="#1a1a1a"/><path d="M8.8 3.4H11" stroke="#f2f2f2" stroke-width="1.1"/></svg>
<div class="t" style="left:43.40px;top:381.44px;font-size:12px;font-weight:normal;color:#1c1c1c;font-family:'Liberation Sans',sans-serif;">Network</div>
<div class="abs" style="left:152px;top:89px;width:560px;height:399px;background:#ffffff;"></div>
<div class="abs" style="left:152px;top:89px;width:560px;height:25px;background:#f1f1f1;"></div>
<div class="abs" style="left:152px;top:114px;width:560px;height:1px;background:#d6d6d6;"></div>
<div class="abs" style="left:444.5px;top:89px;width:1px;height:25px;background:#d6d6d6;"></div>
<div class="abs" style="left:549.5px;top:89px;width:1px;height:25px;background:#d6d6d6;"></div>
<div class="t" style="left:158.50px;top:93.98px;font-size:11.6px;font-weight:bold;color:#4a4a4a;font-family:'Liberation Sans',sans-serif;">Name</div>
<svg class="abs" style="left:426px;top:99px;" width="11" height="5.5" viewBox="0 0 11 5.5"><path d="M0 0H11L5.5 5.5Z" fill="#505050"/></svg>
<div class="t" style="left:450.40px;top:93.98px;font-size:11.6px;font-weight:bold;color:#4a4a4a;font-family:'Liberation Sans',sans-serif;">Size</div>
<div class="t" style="left:501.60px;top:93.98px;font-size:11.6px;font-weight:bold;color:#4a4a4a;font-family:'Liberation Sans',sans-serif;">Type</div>
<div class="t" style="left:555.40px;top:93.98px;font-size:11.6px;font-weight:bold;color:#4a4a4a;font-family:'Liberation Sans',sans-serif;">Date Modified</div>
<svg class="abs" style="left:159px;top:120.7px;" width="6" height="8" viewBox="0 0 6 8"><path d="M0.5 0V8L5.5 4Z" fill="#8c8c8c"/></svg>
<svg class="abs" style="left:171px;top:118.10000000000001px;" width="12" height="11" viewBox="0 0 12 11"><rect x="0" y="0" width="12" height="11" fill="#f6c36d"/><rect x="0" y="9.3" width="12" height="1.7" fill="#e2a94f"/></svg>
<div class="t" style="left:189.50px;top:116.84px;font-size:12px;font-weight:normal;color:#2e2e2e;font-family:'Liberation Sans',sans-serif;">Desktop</div>
<div class="t" style="left:188.50px;width:300px;text-align:right;top:116.84px;font-size:12px;font-weight:normal;color:#2e2e2e;font-family:'Liberation Sans',sans-serif">1 item</div>
<div class="t" style="left:502.90px;top:116.84px;font-size:12px;font-weight:normal;color:#2e2e2e;font-family:'Liberation Sans',sans-serif;">Folder</div>
<div class="t" style="left:555.20px;top:117.93px;font-size:10.4px;font-weight:normal;color:#3c3c3c;font-family:'Liberation Mono',monospace;">Mon Dec 12 05:56:52 2022</div>
<svg class="abs" style="left:171px;top:137.76000000000002px;" width="12" height="11" viewBox="0 0 12 11"><path d="M0 0.5H4.5L5.8 2H12V11H0Z" fill="#f6c36d"/><rect x="4.4" y="4.8" width="3.4" height="4" fill="#474747"/></svg>
<div class="t" style="left:189.50px;top:136.50px;font-size:12px;font-weight:normal;color:#2e2e2e;font-family:'Liberation Sans',sans-serif;">Documents</div>
<div class="t" style="left:188.50px;width:300px;text-align:right;top:136.50px;font-size:12px;font-weight:normal;color:#2e2e2e;font-family:'Liberation Sans',sans-serif">0 items</div>
<div class="t" style="left:502.90px;top:136.50px;font-size:12px;font-weight:normal;color:#2e2e2e;font-family:'Liberation Sans',sans-serif;">Folder</div>
<div class="t" style="left:555.20px;top:137.59px;font-size:10.4px;font-weight:normal;color:#3c3c3c;font-family:'Liberation Mono',monospace;">Mon Dec 12 05:57:02 2022</div>
<svg class="abs" style="left:171px;top:157.42000000000002px;" width="12" height="11" viewBox="0 0 12 11"><path d="M0 0.5H4.5L5.8 2H12V11H0Z" fill="#f6c36d"/><path d="M6 4V7.5M4.4 6.6L6 8.4L7.6 6.6" stroke="#474747" stroke-width="1.1" fill="none"/><rect x="4" y="8.6" width="4" height="0.8" fill="#474747"/></svg>
<div class="t" style="left:189.50px;top:156.16px;font-size:12px;font-weight:normal;color:#2e2e2e;font-family:'Liberation Sans',sans-serif;">Downloads</div>
<div class="t" style="left:188.50px;width:300px;text-align:right;top:156.16px;font-size:12px;font-weight:normal;color:#2e2e2e;font-family:'Liberation Sans',sans-serif">0 items</div>
<div class="t" style="left:502.90px;top:156.16px;font-size:12px;font-weight:normal;color:#2e2e2e;font-family:'Liberation Sans',sans-serif;">Folder</div>
<div class="t" style="left:555.20px;top:157.25px;font-size:10.4px;font-weight:normal;color:#3c3c3c;font-family:'Liberation Mono',monospace;">Mon Dec 12 05:57:02 2022</div>
<svg class="abs" style="left:171px;top:177.08px;" width="12" height="11" viewBox="0 0 12 11"><path d="M0 0.5H4.5L5.8 2H12V11H0Z" fill="#f6c36d"/><path d="M4.7 8.5V4.5H7.8V8" stroke="#474747" stroke-width="0.8" fill="none"/><circle cx="4.2" cy="8.6" r="0.9" fill="#474747"/><circle cx="7.3" cy="8.2" r="0.9" fill="#474747"/></svg>
<div class="t" style="left:189.50px;top:175.82px;font-size:12px;font-weight:normal;color:#2e2e2e;font-family:'Liberation Sans',sans-serif;">Music</div>
<div class="t" style="left:188.50px;width:300px;text-align:right;top:175.82px;font-size:12px;font-weight:normal;color:#2e2e2e;font-family:'Liberation Sans',sans-serif">0 items</div>
<div class="t" style="left:502.90px;top:175.82px;font-size:12px;font-weight:normal;color:#2e2e2e;font-family:'Liberation Sans',sans-serif;">Folder</div>
<div class="t" style="left:555.20px;top:176.91px;font-size:10.4px;font-weight:normal;color:#3c3c3c;font-family:'Liberation Mono',monospace;">Mon Dec 12 05:57:02 2022</div>
<svg class="abs" style="left:159px;top:199.34px;" width="6" height="8" viewBox="0 0 6 8"><path d="M0.5 0V8L5.5 4Z" fill="#8c8c8c"/></svg>
<svg class="abs" style="left:171px;top:196.74px;" width="12" height="11" viewBox="0 0 12 11"><path d="M0 0.5H4.5L5.8 2H12V11H0Z" fill="#f6c36d"/><path d="M3.5 5.5H4.7L5.2 4.7H6.8L7.3 5.5H8.6V9H3.5Z" fill="#474747"/><circle cx="6" cy="7.2" r="0.9" fill="#f6c36d"/></svg>
<div class="t" style="left:189.50px;top:195.48px;font-size:12px;font-weight:normal;color:#2e2e2e;font-family:'Liberation Sans',sans-serif;">Pictures</div>
<div class="t" style="left:188.50px;width:300px;text-align:right;top:195.48px;font-size:12px;font-weight:normal;color:#2e2e2e;font-family:'Liberation Sans',sans-serif">2 items</div>
<div class="t" style="left:502.90px;top:195.48px;font-size:12px;font-weight:normal;color:#2e2e2e;font-family:'Liberation Sans',sans-serif;">Folder</div>
<div class="t" style="left:555.20px;top:196.57px;font-size:10.4px;font-weight:normal;color:#3c3c3c;font-family:'Liberation Mono',monospace;">Mon Dec 12 06:54:41 2022</div>
<svg class="abs" style="left:171px;top:216.4px;" width="12" height="11" viewBox="0 0 12 11"><path d="M0 0.5H4.5L5.8 2H12V11H0Z" fill="#f6c36d"/><path d="M7.4 5L4.8 6.8L7.4 8.6" stroke="#474747" stroke-width="0.9" fill="none"/><circle cx="4.8" cy="6.8" r="0.9" fill="#474747"/></svg>
<div class="t" style="left:189.50px;top:215.14px;font-size:12px;font-weight:normal;color:#2e2e2e;font-family:'Liberation Sans',sans-serif;">Public</div>
<div class="t" style="left:188.50px;width:300px;text-align:right;top:215.14px;font-size:12px;font-weight:normal;color:#2e2e2e;font-family:'Liberation Sans',sans-serif">0 items</div>
<div class="t" style="left:502.90px;top:215.14px;font-size:12px;font-weight:normal;color:#2e2e2e;font-family:'Liberation Sans',sans-serif;">Folder</div>
<div class="t" style="left:555.20px;top:216.23px;font-size:10.4px;font-weight:normal;color:#3c3c3c;font-family:'Liberation Mono',monospace;">Mon Dec 12 05:57:02 2022</div>
<svg class="abs" style="left:171px;top:236.06000000000003px;" width="12" height="11" viewBox="0 0 12 11"><path d="M0 0.5H4.5L5.8 2H12V11H0Z" fill="#f6c36d"/><rect x="4.4" y="4.6" width="3.4" height="4.6" fill="#474747"/></svg>
<div class="t" style="left:189.50px;top:234.80px;font-size:12px;font-weight:normal;color:#2e2e2e;font-family:'Liberation Sans',sans-serif;">Templates</div>
<div class="t" style="left:188.50px;width:300px;text-align:right;top:234.80px;font-size:12px;font-weight:normal;color:#2e2e2e;font-family:'Liberation Sans',sans-serif">0 items</div>
<div class="t" style="left:502.90px;top:234.80px;font-size:12px;font-weight:normal;color:#2e2e2e;font-family:'Liberation Sans',sans-serif;">Folder</div>
<div class="t" style="left:555.20px;top:235.89px;font-size:10.4px;font-weight:normal;color:#3c3c3c;font-family:'Liberation Mono',monospace;">Mon Dec 12 05:57:02 2022</div>
<svg class="abs" style="left:171px;top:255.72px;" width="12" height="11" viewBox="0 0 12 11"><path d="M0 0.5H4.5L5.8 2H12V11H0Z" fill="#f6c36d"/><rect x="4.2" y="4.4" width="3.6" height="5" stroke="#474747" stroke-width="0.8" fill="none"/><path d="M4.2 6.9H7.8" stroke="#474747" stroke-width="0.8"/></svg>
<div class="t" style="left:189.50px;top:254.46px;font-size:12px;font-weight:normal;color:#2e2e2e;font-family:'Liberation Sans',sans-serif;">Videos</div>
<div class="t" style="left:188.50px;width:300px;text-align:right;top:254.46px;font-size:12px;font-weight:normal;color:#2e2e2e;font-family:'Liberation Sans',sans-serif">0 items</div>
<div class="t" style="left:502.90px;top:254.46px;font-size:12px;font-weight:normal;color:#2e2e2e;font-family:'Liberation Sans',sans-serif;">Folder</div>
<div class="t" style="left:555.20px;top:255.55px;font-size:10.4px;font-weight:normal;color:#3c3c3c;font-family:'Liberation Mono',monospace;">Mon Dec 12 05:57:02 2022</div>
<div class="abs" style="left:152px;top:272px;width:560px;height:19px;background:#1f9ede;"></div>
<svg class="abs" style="left:171px;top:275.38px;" width="12" height="11" viewBox="0 0 12 11"><path d="M0 0.5H4.5L5.8 2H12V11H0Z" fill="#f6c36d"/></svg>
<div class="t" style="left:189.50px;top:274.12px;font-size:12px;font-weight:normal;color:#ffffff;font-family:'Liberation Sans',sans-serif;">Warpinator</div>
<div class="t" style="left:188.50px;width:300px;text-align:right;top:274.12px;font-size:12px;font-weight:normal;color:#ffffff;font-family:'Liberation Sans',sans-serif">0 items</div>
<div class="t" style="left:502.90px;top:274.12px;font-size:12px;font-weight:normal;color:#ffffff;font-family:'Liberation Sans',sans-serif;">Folder</div>
<div class="t" style="left:555.20px;top:275.21px;font-size:10.4px;font-weight:normal;color:#ffffff;font-family:'Liberation Mono',monospace;">Mon Dec 12 05:57:07 2022</div>
<div class="abs" style="left:0px;top:488px;width:712px;height:1px;background:#d9d9d9;"></div>
<div class="abs" style="left:0px;top:489px;width:712px;height:25px;background:#f4f4f4;"></div>
<div class="abs" style="left:4px;top:491px;width:23px;height:21px;background:#cccccc;border:1px solid #bdbdbd;border-radius:3px"></div>
<div class="abs" style="left:31px;top:491px;width:23px;height:21px;background:#f8f8f8;border:1px solid #d3d3d3;border-radius:3px"></div>
<div class="abs" style="left:61px;top:491px;width:1px;height:21px;background:#dadada;"></div>
<div class="abs" style="left:69px;top:491px;width:23px;height:21px;background:#f8f8f8;border:1px solid #d3d3d3;border-radius:3px"></div>
<svg class="abs" style="left:9px;top:495px;" width="12" height="12" viewBox="0 0 12 12"><path d="M0.5 1.5H4.3L5.2 2.6H9.4V4.2H2.6V9.5H0.5Z" fill="#111"/><rect x="2.6" y="4.8" width="7.6" height="4.8" fill="#111"/></svg>
<svg class="abs" style="left:36.5px;top:495px;" width="12" height="12" viewBox="0 0 12 12"><circle cx="2.8" cy="1.8" r="1.2" fill="#111"/><path d="M3 2V8.8H8.8M3 5.4H8.2" stroke="#111" stroke-width="0.9" fill="none"/><circle cx="8.6" cy="5.4" r="1" fill="#111"/><path d="M3.6 6.4L7.6 8.4" stroke="#111" stroke-width="0.9"/></svg>
<svg class="abs" style="left:74px;top:495px;" width="12" height="12" viewBox="0 0 12 12"><rect x="1.2" y="1.8" width="9.6" height="7.6" rx="1" stroke="#111" stroke-width="1.3" fill="none"/><path d="M5.6 3.6V7.6L3.4 5.6Z" fill="#111"/><path d="M6.5 2.4V8.8" stroke="#111" stroke-width="0.9"/></svg>
<div class="t" style="left:191.50px;top:493.81px;font-size:11.8px;font-weight:normal;color:#303030;font-family:'Liberation Sans',sans-serif;">"Warpinator" selected (containing 0 items), Free space: 1.9 GB</div>
<div class="abs" style="left:622px;top:498.8px;width:83px;height:5px;background:#c8c8c8;border-radius:2.5px"></div>
<div class="abs" style="left:622px;top:498.8px;width:14px;height:5px;background:#1f9ede;border-radius:2.5px"></div>
<div class="abs" style="left:630.8px;top:494.2px;width:14.5px;height:14.5px;background:#f8f8f8;border:1px solid #b4b4b4;border-radius:50%"></div>
</div>
<div class="abs" style="left:0px;top:765px;width:1280px;height:36px;background:#2e2e2e;"></div>
<svg class="abs" style="left:3px;top:768px;" width="31" height="30" viewBox="0 0 31 30"><circle cx="15.5" cy="15" r="13.6" stroke="#e6e6e6" stroke-width="2.2" fill="none"/><path d="M8.8 8.2V17.5A3.5 3.5 0 0 0 12.3 21H19.5A3.5 3.5 0 0 0 23 17.5V13.2A3 3 0 0 0 17.2 13.2V19M17.2 13.2A3 3 0 0 0 11.5 13.2V21" stroke="#e6e6e6" stroke-width="1.8" fill="none"/></svg>
<div class="abs" style="left:44px;top:770px;width:1px;height:30px;background:#474747;"></div>
<div class="abs" style="left:52px;top:765px;width:34px;height:36px;background:#474747;"></div>
<div class="abs" style="left:52px;top:798.5px;width:34px;height:2.5px;background:#1f9ede;"></div>
<svg class="abs" style="left:56.5px;top:772.5px;" width="26" height="21" viewBox="0 0 26 21"><path d="M1.5 1H9.5L11.5 3H24.5A1.2 1.2 0 0 1 25.5 4.2V8H0.5V2Z" fill="#e0a84e"/><rect x="2.5" y="3.5" width="21" height="3.5" fill="#e6e6e6"/><rect x="0.3" y="5.8" width="25.4" height="14.8" rx="1" fill="#f6c36d"/><path d="M18 20.6L25.7 13V16L21.2 20.6Z" fill="#1f9ede"/></svg>
<svg class="abs" style="left:52px;top:764px;" width="18" height="16" viewBox="0 0 18 16"><circle cx="8.5" cy="7.5" r="6.3" fill="#363636"/><text x="8.3" y="11.2" font-family="Liberation Sans" font-weight="bold" font-size="10" fill="#dde6ee" text-anchor="middle">2</text></svg>
<svg class="abs" style="left:92px;top:769.5px;" width="26" height="26" viewBox="0 0 26 26"><rect x="0" y="0" width="25.2" height="25.5" rx="5" fill="#f4703a"/><path d="M13.2 4C14.2 5 14.8 6 15 7.2C17.6 8.4 19.6 10.6 20.2 13.2C20.8 17.8 17.6 21.6 13 21.8C8.6 22 5 18.6 4.8 14.2C4.7 11.8 5.6 9.6 7.2 8C7.2 9 7.6 9.8 8.2 10.4C8.6 9.6 9.4 9 10.2 8.7C10.8 8.5 11.2 8.3 11.4 8C11.6 6.5 12.2 5 13.2 4Z" fill="#fff"/><circle cx="12.6" cy="14.2" r="4.1" fill="#f4703a"/><path d="M11 10.2C12.4 9.6 14.4 10 15.4 11.4C14.2 11 12.6 11.4 11.6 12.2Z" fill="#f4703a"/></svg>
<svg class="abs" style="left:127px;top:769px;" width="27" height="27" viewBox="0 0 27 27"><rect x="1" y="1" width="25" height="25" rx="5" fill="#262626" stroke="#0d0d0d" stroke-width="1.6"/><text x="3.6" y="10.2" font-family="Liberation Mono" font-size="8.5" fill="#e8e8e8">$</text><rect x="9.6" y="9.6" width="5.6" height="1.3" fill="#eeeeee"/></svg>
<svg class="abs" style="left:1162px;top:776px;" width="15" height="15" viewBox="0 0 15 15"><rect x="5" y="0.8" width="5" height="3.6" fill="#eeeeee"/><path d="M7.5 4.4V7M2.8 10V7H12.2V10" stroke="#eeeeee" stroke-width="1.1" fill="none"/><rect x="0.8" y="10" width="4" height="4" fill="#eeeeee"/><rect x="10.2" y="10" width="4" height="4" fill="#eeeeee"/></svg>
<svg class="abs" style="left:1185px;top:776px;" width="15" height="15" viewBox="0 0 15 15"><path d="M1 5H3.5L7.2 1.5V13.5L3.5 10H1Z" fill="#eeeeee"/><path d="M9.2 4.8Q10.6 7.5 9.2 10.2" stroke="#eeeeee" stroke-width="1.3" fill="none"/><path d="M11.6 2.8Q14 7.5 11.6 12.2" stroke="#8a8a8a" stroke-width="1.1" fill="none"/></svg>
<svg class="abs" style="left:1210px;top:775.5px;" width="12" height="15" viewBox="0 0 12 15"><path d="M3.2 1.2H8.8V3H10.8V14.2H1.2V3H3.2Z" stroke="#eeeeee" stroke-width="1.1" fill="none"/><rect x="2.6" y="6.5" width="6.8" height="6.5" fill="#dddddd"/></svg>
<div class="t" style="left:1230.60px;top:775.88px;font-size:11.3px;font-weight:bold;color:#f2f2f2;font-family:'Liberation Sans',sans-serif;">06:58</div>
<div class="abs" style="left:1269px;top:769px;width:7px;height:28px;background:#262626;"></div>
</body></html>
